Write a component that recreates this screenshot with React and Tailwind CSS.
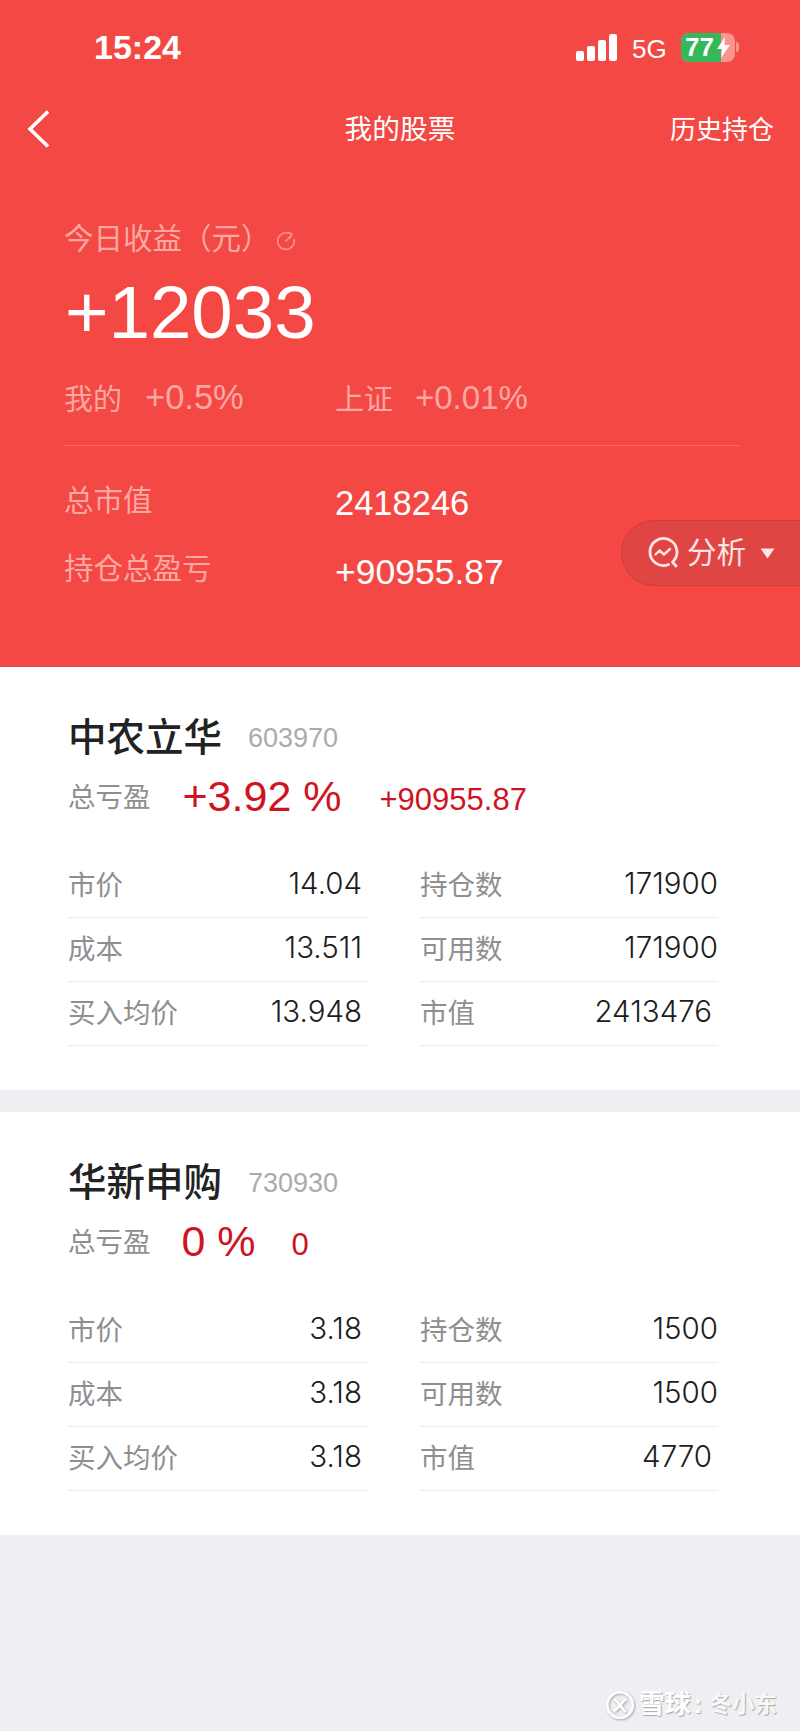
const stocks = [
  {
    name: "中农立华", code: "603970", pct: "+3.92 %", amount: "+90955.87", pctGap: "ml-[32px]", amtGap: "ml-[38px]",
    left: [["市价", "14.04"], ["成本", "13.511"], ["买入均价", "13.948"]],
    right: [["持仓数", "171900"], ["可用数", "171900"], ["市值", "2413476"]],
  },
  {
    name: "华新申购", code: "730930", pct: "0 %", amount: "0", pctGap: "ml-[31px]", amtGap: "ml-[36px]",
    left: [["市价", "3.18"], ["成本", "3.18"], ["买入均价", "3.18"]],
    right: [["持仓数", "1500"], ["可用数", "1500"], ["市值", "4770"]],
  },
];

function Row({ label, value, inset }) {
  return (
    <div className="h-[64px] flex items-center justify-between border-b border-[#ececec]">
      <span className="text-[27.5px] text-[#8f8f8f]">{label}</span>
      <span className={`[font-family:Inter,sans-serif] font-light text-[29.5px] mb-[4px] text-[#1c1c1c] ${inset}`}>{value}</span>
    </div>
  );
}

function Card({ s }) {
  return (
    <section className="h-[423px] bg-white pl-[68px] pr-[82px] pt-[46px]">
      <div className="h-[50px] flex items-center">
        <span className="text-[38.5px] font-medium text-[#222222]">{s.name}</span>
        <span className="text-[27px] text-[#ababab] ml-[26px]">{s.code}</span>
      </div>
      <div className="h-[44px] mt-[12px] flex items-center">
        <span className="text-[27.5px] text-[#8f8f8f] mt-[1px]">总亏盈</span>
        <span className={`text-[43px] text-[#cf1322] mb-[2px] ${s.pctGap}`}>{s.pct}</span>
        <span className={`text-[31px] text-[#cf1322] mt-[7px] ${s.amtGap}`}>{s.amount}</span>
      </div>
      <div className="mt-[35px] grid grid-cols-[300px_298px] gap-x-[52px]">
        <div>
          {s.left.map(([l, v]) => <Row key={l} label={l} value={v} inset="mr-[6px]" />)}
        </div>
        <div>
          {s.right.map(([l, v]) => <Row key={l} label={l} value={v} inset={l === "市值" ? "mr-[6px]" : ""} />)}
        </div>
      </div>
    </section>
  );
}

function StatusIcons() {
  return (
    <div className="flex items-center">
      <svg width="41" height="27" viewBox="0 0 41 27" fill="#ffffff">
        <rect x="0" y="17" width="8" height="10" rx="2" />
        <rect x="11" y="12" width="8" height="15" rx="2" />
        <rect x="22" y="6" width="8" height="21" rx="2" />
        <rect x="33" y="0" width="8" height="27" rx="2" />
      </svg>
      <span className="text-[26px] leading-none whitespace-nowrap text-white ml-[15px] w-[39px] mt-[3px]">5G</span>
      <div className="relative ml-[10px] w-[54px] h-[29px] rounded-[8px] bg-[#fb9391] flex">
        <div className="w-[40px] h-full rounded-l-[8px] bg-[#35b85a]" />
        <span className="absolute left-[4px] top-0 h-full flex items-center text-[26px] leading-none font-bold text-white">77</span>
        <svg className="absolute left-[36px] top-[4px]" width="13" height="21" viewBox="0 0 13 21" fill="#ffffff">
          <path d="M8 0 L0 12 H5 L4 21 L13 8 H7.5 Z" />
        </svg>
      </div>
      <div className="w-[3px] h-[10px] ml-[1px] rounded-r-[3px] bg-[#fb9391]" />
    </div>
  );
}

export default function App() {
  return (
    <div className="w-[800px] h-[1731px] bg-[#eeeef3] flex flex-col overflow-hidden [font-family:'Liberation_Sans','Noto_Sans_CJK_SC',sans-serif]">
      <header className="relative h-[667px] shrink-0 bg-[#f44845] border-b border-[#d94a47]">
        <div className="pt-[32px] h-[62px] pl-[94px] pr-[61px] flex items-center justify-between">
          <span className="text-[34px] font-bold text-white">15:24</span>
          <StatusIcons />
        </div>
        <div className="relative mt-[43px] h-[50px] flex items-center justify-center">
          <svg className="absolute left-[26px] top-[5px]" width="25" height="38" viewBox="0 0 25 38" fill="none" stroke="#ffffff" strokeWidth="3.6">
            <path d="M22 1.5 L4 19 L22 36.5" />
          </svg>
          <span className="text-[27.7px] text-white">我的股票</span>
          <span className="absolute right-[26px] text-[26px] text-white">历史持仓</span>
        </div>
        <div className="pl-[64px] pr-[60px]">
          <div className="mt-[64px] h-[40px] flex items-center text-[29.5px] text-[#fba8a3]">
            今日收益（元）
            <svg className="ml-[5px] mt-[4px]" width="20" height="20" viewBox="0 0 20 20" fill="none" stroke="#fb8f8b" strokeWidth="1.6">
              <path d="M13.5 2.6 A8.3 8.3 0 1 0 18 8" />
              <path d="M9.5 10.5 L15.5 4 M12.5 1 L16 3.5 L14 7.5" />
            </svg>
          </div>
          <div className="mt-[14px] h-[80px] flex items-center text-[74.5px] text-white ml-[1px]">+12033</div>
          <div className="mt-[27px] h-[40px] flex items-center text-[#fba8a3]">
            <span className="w-[81px] text-[29px] mt-[2px]">我的</span>
            <span className="w-[190px] text-[34.5px] mb-[4px]">+0.5%</span>
            <span className="w-[80px] text-[29px] mt-[2px]">上证</span>
            <span className="text-[33px] mb-[4px]">+0.01%</span>
          </div>
          <div className="mt-[25px] h-px bg-[#fb6966]" />
          <div className="mt-[36px] h-[40px] flex items-center">
            <span className="w-[271px] text-[29.5px] text-[#fba8a3] mb-[2px]">总市值</span>
            <span className="text-[34.5px] text-white mt-[4px]">2418246</span>
          </div>
          <div className="mt-[30px] h-[40px] flex items-center">
            <span className="w-[271px] text-[29.5px] text-[#fba8a3] mb-[6px]">持仓总盈亏</span>
            <span className="text-[35.5px] text-white mt-[2px]">+90955.87</span>
          </div>
        </div>
        <div className="absolute left-[621px] top-[520px] w-[179px] h-[66px] pl-[25px] flex items-center rounded-l-[33px] bg-[#de4543] border border-r-0 border-[#d23d3c]">
          <svg width="32" height="32" viewBox="0 0 32 32" fill="none" stroke="#fde4e2" strokeWidth="2.8" strokeLinecap="round" strokeLinejoin="round">
            <path d="M21.5 27.5 A13.5 13.5 0 1 1 25.5 25 L29 29" />
            <path d="M8.5 17.5 L12.5 13.5 L17 17.5 L23 12" strokeWidth="2.4" />
          </svg>
          <span className="ml-[8px] text-[29.5px] text-[#fde4e2]">分析</span>
          <svg className="ml-[14px]" width="15" height="11" viewBox="0 0 15 11" fill="#fde4e2">
            <path d="M0.5 0.5 H14.5 L7.5 10.5 Z" />
          </svg>
        </div>
      </header>
      <Card s={stocks[0]} />
      <div className="h-[22px] shrink-0" />
      <Card s={stocks[1]} />
      <div className="mt-[150px] pr-[23px] flex items-center justify-end text-white [text-shadow:1px_1px_1px_#a8a8a8]">
        <svg className="mr-[5px] [filter:drop-shadow(1px_1px_1px_#a8a8a8)]" width="28" height="28" viewBox="0 0 28 28" fill="none" stroke="#ffffff" strokeWidth="2.6">
          <path d="M5 23 A12.5 12.5 0 0 1 23 5" />
          <path d="M23 5 A12.5 12.5 0 0 1 5 23" />
          <path d="M8 8 C13 11 15 17 20 21 M20 8 C16 11 13 17 8 20" />
        </svg>
        <span className="text-[26px] font-bold">雪球</span>
        <span className="text-[26px] font-bold ml-[3px] mr-[7px]">:</span>
        <span className="text-[22.5px] font-bold text-[#f8f8f8]">冬小东</span>
      </div>
    </div>
  );
}
